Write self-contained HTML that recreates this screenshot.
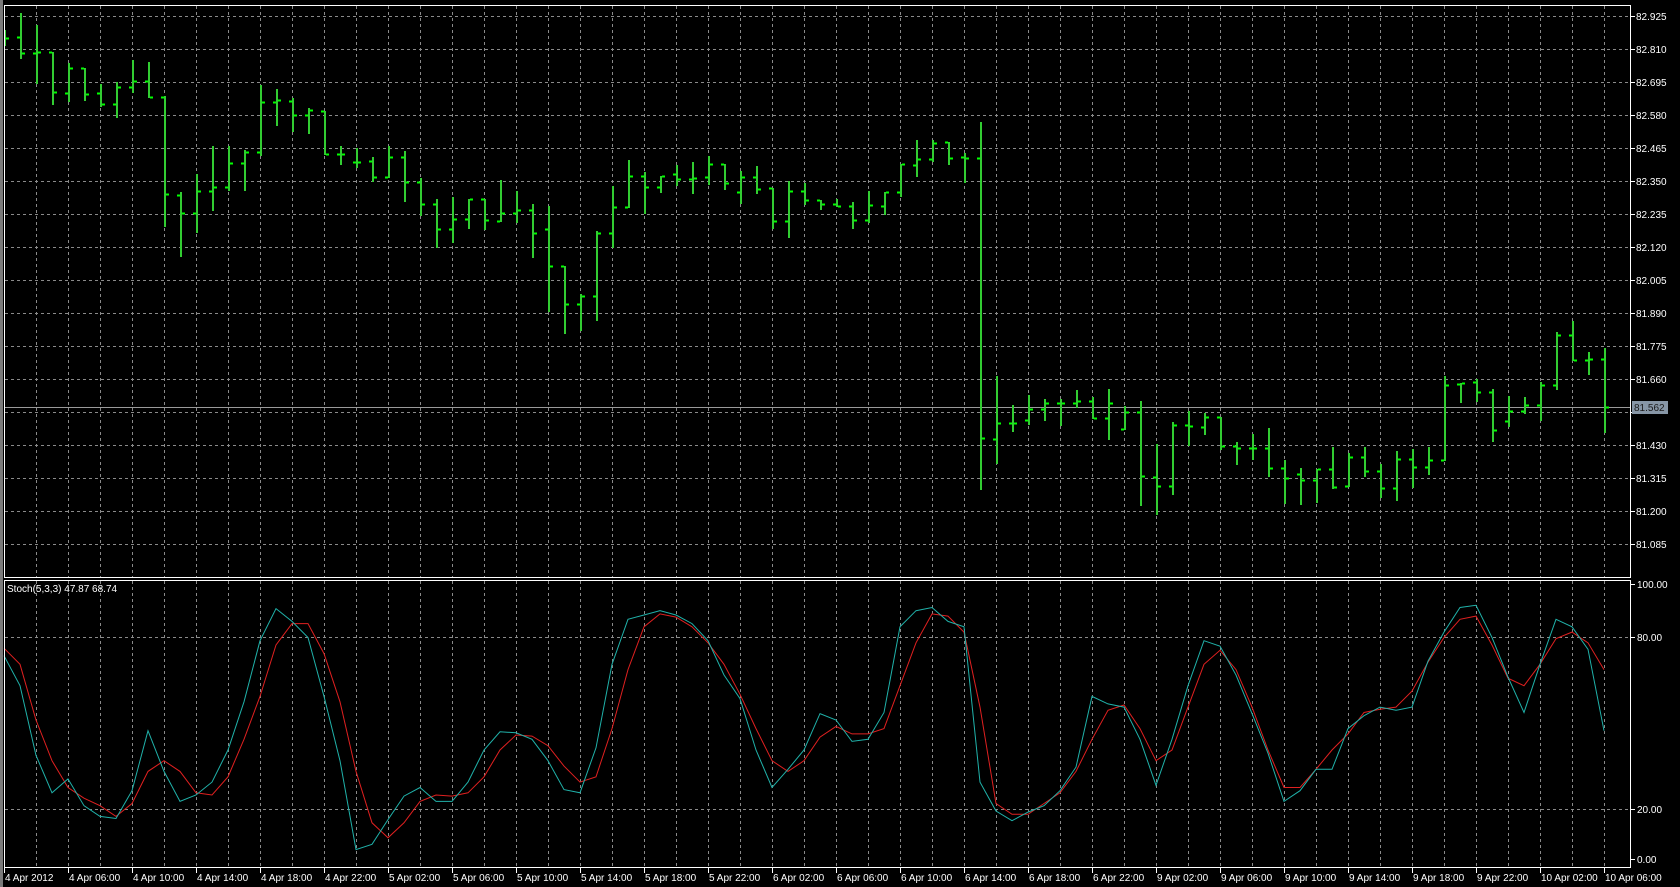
<!DOCTYPE html>
<html><head><meta charset="utf-8"><style>
html,body{margin:0;padding:0;background:#000;width:1680px;height:887px;overflow:hidden}
svg{display:block}
text{font-family:"Liberation Sans",sans-serif;font-size:10px;fill:#fff}
</style></head><body>
<svg id="s" width="1680" height="887" xmlns="http://www.w3.org/2000/svg">
<rect x="0" y="0" width="1680" height="887" fill="#000"/>
<rect x="0" y="0" width="3" height="887" fill="#7a7a7a"/>
<g id="grid" stroke="#8a8a8a" stroke-width="1" stroke-dasharray="3,3" fill="none"></g>
<line x1="4" y1="407.5" x2="1630" y2="407.5" stroke="#9a9a9a" stroke-width="1"/>
<g id="bars"></g>
<g id="stoch" fill="none" stroke-width="1"></g>
<g stroke="#fff" stroke-width="1" fill="none">
<path d="M4.5 5.5H1630.5V577.5H4.5Z"/>
<path d="M4.5 580.5H1630.5V867.5H4.5Z"/>
</g>
<g id="labels"></g>
<rect x="1632" y="401" width="36" height="13" fill="#8796a6"/>
<text x="1634" y="411" style="fill:#1a1a1a">81.562</text>
<text x="7" y="592">Stoch(5,3,3) 47.87 68.74</text>
</svg>
<script>
var NS="http://www.w3.org/2000/svg";
function el(p,t,a,txt){var e=document.createElementNS(NS,t);for(var k in a)e.setAttribute(k,a[k]);if(txt!=null)e.textContent=txt;p.appendChild(e);return e;}
var g=document.getElementById('grid'),L=document.getElementById('labels');
for(var x=36;x<1630;x+=32){el(g,'line',{x1:x+.5,y1:6,x2:x+.5,y2:577});el(g,'line',{x1:x+.5,y1:581,x2:x+.5,y2:867});}
var prices=["82.925","82.810","82.695","82.580","82.465","82.350","82.235","82.120","82.005","81.890","81.775","81.660","81.545","81.430","81.315","81.200","81.085"];
for(var k=0;k<17;k++){var y=16+33*k;el(g,'line',{x1:5,y1:y+.5,x2:1630,y2:y+.5});
el(L,'line',{x1:1630,y1:y+.5,x2:1635,y2:y+.5,stroke:'#fff'});
if(k!=12)el(L,'text',{x:1636,y:y+4},prices[k]);}
[[637,"80.00"],[809,"20.00"]].forEach(function(a){el(g,'line',{x1:5,y1:a[0]+.5,x2:1630,y2:a[0]+.5});});
[[584,"100.00"],[637,"80.00"],[809,"20.00"],[859,"0.00"]].forEach(function(a){el(L,'line',{x1:1630,y1:a[0]+.5,x2:1635,y2:a[0]+.5,stroke:'#fff'});el(L,'text',{x:1637,y:a[0]+4},a[1]);});
var dates=["4 Apr 2012","4 Apr 06:00","4 Apr 10:00","4 Apr 14:00","4 Apr 18:00","4 Apr 22:00","5 Apr 02:00","5 Apr 06:00","5 Apr 10:00","5 Apr 14:00","5 Apr 18:00","5 Apr 22:00","6 Apr 02:00","6 Apr 06:00","6 Apr 10:00","6 Apr 14:00","6 Apr 18:00","6 Apr 22:00","9 Apr 02:00","9 Apr 06:00","9 Apr 10:00","9 Apr 14:00","9 Apr 18:00","9 Apr 22:00","10 Apr 02:00","10 Apr 06:00"];
for(var k=0;k<dates.length;k++){var x=4+64*k;el(L,'line',{x1:x+.5,y1:867,x2:x+.5,y2:873,stroke:'#fff'});el(L,'text',{x:x+1,y:881},dates[k]);}
// O,C,H,L
var B=[[38,38,30,45],[37,53,13,58],[53,52,25,83],[52,92,52,104],[93,68,63,101],[68,94,68,100],[93,104,84,106],[104,87,82,117],[87,81,60,92],[81,97,62,97],[97,194,96,226],[195,213,192,256],[213,191,174,232],[191,187,146,210],[187,163,146,190],[163,152,150,190],[152,102,85,155],[102,100,89,125],
[101,115,98,131],[115,110,108,133],[111,154,111,154],[154,154,146,164],[162,162,148,167],[161,177,157,181],[177,157,146,177],[157,182,151,201],[182,204,178,215],[204,229,199,247],[229,219,197,242],[219,199,199,228],[199,220,199,229],[221,213,180,221],[213,210,191,222],[210,233,204,257],[229,266,206,311],[266,304,266,333],
[304,296,294,330],[296,233,231,320],[233,207,186,247],[207,176,160,207],[176,187,172,213],[187,176,176,192],[174,179,165,185],[179,178,162,193],[177,164,156,184],[164,183,164,189],[192,177,171,203],[177,189,166,193],[188,221,188,228],[221,191,181,237],[191,200,183,204],[200,204,200,209],[204,206,199,206],[206,220,202,228],[220,205,191,222],[206,192,192,214],[192,164,164,196],[165,159,140,176],[159,143,140,161],[142,158,142,164],[157,158,153,182],
[158,438,122,489],[439,423,376,463],[423,423,405,431],[420,409,395,424],[409,403,399,420],[403,403,399,425],[403,401,390,407],[401,418,397,418],[418,403,389,439],[429,412,406,429],[412,476,401,505],[477,486,444,514],[486,425,422,494],[425,426,411,445],[427,417,413,434],[417,446,417,449],[446,448,442,464],[448,448,434,459],[448,468,428,476],[468,478,460,503],
[474,480,468,504],[480,469,469,502],[469,487,447,488],[486,457,453,486],[457,471,447,476],[471,488,464,497],[488,459,451,500],[459,467,449,487],[467,460,447,474],[460,385,376,460],[384,383,383,402],[382,392,379,401],[392,430,389,441],[421,411,396,426],[411,405,397,413],[405,385,382,420],[385,335,332,389],[335,360,321,360],[360,359,352,374],[359,407,348,432]];
var bg=document.getElementById('bars'),d1="",d2="";
B.forEach(function(b,i){var x=4+16*i;var vx=x+1;
d1+="M"+vx+" "+b[2]+"V"+(b[3]+1);
if(i>0)d2+="M"+(x-3)+" "+(b[0]+0.5)+"H"+x;
d2+="M"+(x+2)+" "+(b[1]+0.5)+"H"+(x+5);});
el(bg,'path',{d:d1,stroke:'#32cd32','stroke-width':2,fill:'none'});
el(bg,'path',{d:d2,stroke:'#00ff00','stroke-width':2,fill:'none'});
var cy=[612,640,705,740,727,752,762,764,738,682,720,748,742,730,700,655,598,568,580,595,650,710,793,788,765,743,735,748,748,730,700,683,684,690,710,737,740,698,620,578,574,570,574,582,598,630,652,700,735,718,700,666,672,692,690,665,585,570,567,580,585,730,757,766,758,752,738,716,650,657,660,690,733,690,640,598,603,630,666,703,748,738,718,718,680,668,660,663,660,617,590,567,565,595,632,665,620,578,585,606,682];
var ry=[605,620,672,710,735,745,752,762,750,720,710,720,740,742,725,690,650,602,582,582,610,655,720,768,782,768,748,742,743,740,725,700,686,687,696,715,730,725,680,625,585,573,576,585,600,620,648,680,710,720,710,688,678,685,685,680,640,600,573,575,590,660,750,760,760,750,740,720,690,663,658,680,710,700,660,620,607,625,660,700,735,735,718,700,685,665,662,660,645,618,595,578,575,602,633,640,620,596,590,600,625];
function pl(a){return a.map(function(v,i){var x=(i==a.length-1)?1604:Math.min(4+16*i,1604);return x+","+(v*1.0714).toFixed(1);}).join(" ");}
var sg=document.getElementById('stoch');
el(sg,'polyline',{points:pl(ry),stroke:'#e02020'});
el(sg,'polyline',{points:pl(cy),stroke:'#20b2aa'});
</script>
</body></html>
